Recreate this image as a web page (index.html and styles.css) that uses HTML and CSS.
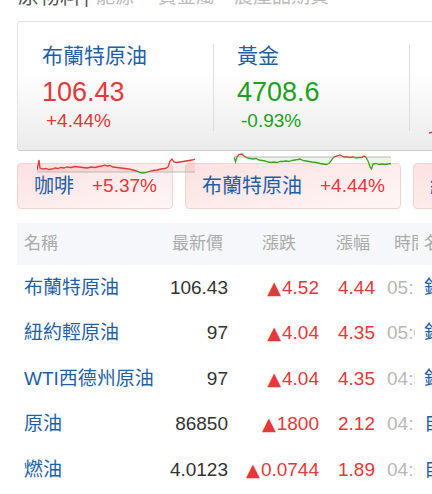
FILE: index.html
```html
<!DOCTYPE html>
<html lang="zh-Hant">
<head>
<meta charset="utf-8">
<title>原物料</title>
<link rel="stylesheet" href="styles.css">
</head>
<body>
<div class="crumbs">
  <div class="crumbs-line">
    <span class="crumb-main">原物料</span><span class="crumb-bar">|</span><span class="crumb c1">能源</span><span class="crumb c2">貴金屬</span><span class="crumb c3">農產品期貨</span>
  </div>
</div>

<div class="hero">
  <div class="board">
    <div class="quote">
      <div class="q-name">布蘭特原油</div>
      <div class="q-price up">106.43</div>
      <div class="q-pct up">+4.44%</div>
    </div>
    <div class="quote">
      <div class="q-name">黃金</div>
      <div class="q-price down">4708.6</div>
      <div class="q-pct down">-0.93%</div>
    </div>
    <div class="quote">
      <div class="q-name">紐約輕原油</div>
      <div class="q-price up">97</div>
      <div class="q-pct up">+4.35%</div>
    </div>
  </div>

  <div class="chips">
    <div class="chip"><span class="chip-name">咖啡</span><span class="chip-pct up">+5.37%</span></div>
    <div class="chip"><span class="chip-name">布蘭特原油</span><span class="chip-pct up">+4.44%</span></div>
    <div class="chip"><span class="chip-name">紐約輕原油</span><span class="chip-pct up">+4.35%</span></div>
  </div>

  <svg class="spark spark1" width="158" height="20" viewBox="0 0 158 20">
    <defs>
      <clipPath id="s1up"><rect x="0" y="0" width="158" height="17"/></clipPath>
      <clipPath id="s1dn"><rect x="0" y="17" width="158" height="3"/></clipPath>
    </defs>
    <polygon clip-path="url(#s1up)" fill="rgba(229,57,53,0.10)" points="0,15 2,5 3,13 6,14 9,13.5 12,14.5 15,14 18,13 21,13.5 24,12.5 27,13 30,12 34,12.5 38,11.5 42,12 46,12.5 50,13 54,12 58,12.5 62,11.5 65,11 68,10 70,11 73,10.5 76,12 80,12.5 84,13 88,13.5 92,14 96,15 100,16 103,17.5 106,18 109,17.5 112,16.5 116,15.5 120,15 124,14 128,13.5 131,12 133,6 135,4 137,7 140,7.5 143,7 146,6.5 149,6 152,5.5 155,5 158,4 158,17 0,17"/>
    <line x1="0" y1="17" x2="158" y2="17" stroke="#b9b9b9" stroke-width="1"/>
    <polyline clip-path="url(#s1up)" fill="none" stroke="#e53935" stroke-width="1.3" points="0,15 2,5 3,13 6,14 9,13.5 12,14.5 15,14 18,13 21,13.5 24,12.5 27,13 30,12 34,12.5 38,11.5 42,12 46,12.5 50,13 54,12 58,12.5 62,11.5 65,11 68,10 70,11 73,10.5 76,12 80,12.5 84,13 88,13.5 92,14 96,15 100,16 103,17.5 106,18 109,17.5 112,16.5 116,15.5 120,15 124,14 128,13.5 131,12 133,6 135,4 137,7 140,7.5 143,7 146,6.5 149,6 152,5.5 155,5 158,4"/>
    <polyline clip-path="url(#s1dn)" fill="none" stroke="#3aa51f" stroke-width="1.3" points="0,15 2,5 3,13 6,14 9,13.5 12,14.5 15,14 18,13 21,13.5 24,12.5 27,13 30,12 34,12.5 38,11.5 42,12 46,12.5 50,13 54,12 58,12.5 62,11.5 65,11 68,10 70,11 73,10.5 76,12 80,12.5 84,13 88,13.5 92,14 96,15 100,16 103,17.5 106,18 109,17.5 112,16.5 116,15.5 120,15 124,14 128,13.5 131,12 133,6 135,4 137,7 140,7.5 143,7 146,6.5 149,6 152,5.5 155,5 158,4"/>
  </svg>

  <svg class="spark spark2" width="158" height="26" viewBox="0 0 158 26">
    <defs>
      <clipPath id="s2up"><rect x="0" y="0" width="158" height="12"/></clipPath>
      <clipPath id="s2dn"><rect x="0" y="12" width="158" height="14"/></clipPath>
    </defs>
    <polygon clip-path="url(#s2dn)" fill="rgba(58,165,31,0.10)" points="0,12 1.5,17 3,12 5,9.5 8,9 10,11 13,13 16,13.5 19,14 22,13.5 25,15 28,15.5 31,16 34,17 37,17.5 40,17 43,17.5 46,16.5 49,16.5 52,16 55,16.5 58,15.5 61,15 64,14.5 66,14 69,15.5 72,16 75,16.5 78,17 82,17.5 86,18.5 89,19 92,19.5 95,18.5 97,16 99,13 101,11.5 103,11 106,10 108,11 110,12 113,12 116,12.5 119,12 122,13 125,12.5 128,12.5 130,11 132,12.5 134,16 136,22 137.5,24 139,19 142,18.5 145,19.5 148,19 151,19.5 154,19 157,18.5 157,12 0,12"/>
    <line x1="0" y1="12" x2="157" y2="12" stroke="#b9b9b9" stroke-width="1"/>
    <polyline clip-path="url(#s2up)" fill="none" stroke="#e53935" stroke-width="1.3" points="0,12 1.5,17 3,12 5,9.5 8,9 10,11 13,13 16,13.5 19,14 22,13.5 25,15 28,15.5 31,16 34,17 37,17.5 40,17 43,17.5 46,16.5 49,16.5 52,16 55,16.5 58,15.5 61,15 64,14.5 66,14 69,15.5 72,16 75,16.5 78,17 82,17.5 86,18.5 89,19 92,19.5 95,18.5 97,16 99,13 101,11.5 103,11 106,10 108,11 110,12 113,12 116,12.5 119,12 122,13 125,12.5 128,12.5 130,11 132,12.5 134,16 136,22 137.5,24 139,19 142,18.5 145,19.5 148,19 151,19.5 154,19 157,18.5"/>
    <polyline clip-path="url(#s2dn)" fill="none" stroke="#3aa51f" stroke-width="1.3" points="0,12 1.5,17 3,12 5,9.5 8,9 10,11 13,13 16,13.5 19,14 22,13.5 25,15 28,15.5 31,16 34,17 37,17.5 40,17 43,17.5 46,16.5 49,16.5 52,16 55,16.5 58,15.5 61,15 64,14.5 66,14 69,15.5 72,16 75,16.5 78,17 82,17.5 86,18.5 89,19 92,19.5 95,18.5 97,16 99,13 101,11.5 103,11 106,10 108,11 110,12 113,12 116,12.5 119,12 122,13 125,12.5 128,12.5 130,11 132,12.5 134,16 136,22 137.5,24 139,19 142,18.5 145,19.5 148,19 151,19.5 154,19 157,18.5"/>
  </svg>

  <svg class="spark spark3" width="4" height="4" viewBox="0 0 4 4">
    <polyline fill="none" stroke="#e53935" stroke-width="1.3" points="0,2 2,1.5 4,1"/>
  </svg>
</div>

<div class="table">
  <div class="thead">
    <div class="h-name">名稱</div>
    <div class="h-price">最新價</div>
    <div class="h-chg">漲跌</div>
    <div class="h-pct">漲幅</div>
    <div class="h-time"><span>時間</span></div>
    <div class="h-src">名稱</div>
  </div>
  <div class="row">
    <div class="c-name">布蘭特原油</div>
    <div class="c-price">106.43</div>
    <div class="c-chg"><span class="tri">▲</span>4.52</div>
    <div class="c-pct">4.44</div>
    <div class="c-time"><span>05:12</span></div>
    <div class="c-src">銀河</div>
  </div>
  <div class="row">
    <div class="c-name">紐約輕原油</div>
    <div class="c-price">97</div>
    <div class="c-chg"><span class="tri">▲</span>4.04</div>
    <div class="c-pct">4.35</div>
    <div class="c-time"><span>05:06</span></div>
    <div class="c-src">銀河</div>
  </div>
  <div class="row">
    <div class="c-name">WTI西德州原油</div>
    <div class="c-price">97</div>
    <div class="c-chg"><span class="tri">▲</span>4.04</div>
    <div class="c-pct">4.35</div>
    <div class="c-time"><span>04:58</span></div>
    <div class="c-src">銀河</div>
  </div>
  <div class="row">
    <div class="c-name">原油</div>
    <div class="c-price">86850</div>
    <div class="c-chg"><span class="tri">▲</span>1800</div>
    <div class="c-pct">2.12</div>
    <div class="c-time"><span>04:17</span></div>
    <div class="c-src">自營</div>
  </div>
  <div class="row">
    <div class="c-name">燃油</div>
    <div class="c-price">4.0123</div>
    <div class="c-chg"><span class="tri">▲</span>0.0744</div>
    <div class="c-pct">1.89</div>
    <div class="c-time"><span>04:55</span></div>
    <div class="c-src">自營</div>
  </div>
</div>
</body>
</html>
```

FILE: styles.css
```css
* {
  box-sizing: border-box;
}

html,
body {
  margin: 0;
  padding: 0;
}

body {
  width: 432px;
  height: 494px;
  overflow: hidden;
  background: #fff;
  font-family: "Liberation Sans", "Noto Sans CJK TC", sans-serif;
  color: #333;
}

.up {
  color: #e5383b;
}

.down {
  color: #1fa01f;
}

/* breadcrumb (cut off at top) */
.crumbs {
  height: 21px;
  overflow: hidden;
}

.crumbs-line {
  margin-top: -14px;
  padding-left: 18px;
  height: 20px;
  line-height: 20px;
  white-space: nowrap;
}

.crumb-main {
  font-size: 21px;
  color: #555;
}

.crumb-bar {
  font-size: 19px;
  color: #555;
  margin-left: 3px;
}

.crumb {
  font-size: 19px;
  color: #bbb;
}

.c1 {
  margin-left: 7px;
}

.c2 {
  margin-left: 24px;
}

.c3 {
  margin-left: 19px;
}

/* hero area */
.hero {
  position: relative;
}

.board {
  margin-left: 17px;
  width: 620px;
  height: 130px;
  padding-top: 22px;
  display: flex;
  border: 1px solid #e3e3e3;
  border-bottom-color: #cdcdcd;
  border-radius: 3px 0 0 3px;
  background: linear-gradient(#ffffff 38%, #ebebeb);
}

.quote {
  flex: none;
  width: 196px;
  height: 87px;
  padding-left: 23px;
  border-left: 1px solid #dedede;
}

.quote:first-child {
  width: 195px;
  padding-left: 24px;
  border-left: none;
}

.q-name {
  font-size: 21px;
  line-height: 24px;
  color: #1f5fa8;
}

.q-price {
  margin-top: 8px;
  font-size: 27px;
  line-height: 32px;
}

.q-pct {
  margin-top: 2px;
  margin-left: 4px;
  font-size: 19px;
  line-height: 22px;
}

.chips {
  display: flex;
  gap: 12px;
  margin: 12px 0 0 17px;
}

.chip {
  flex: none;
  height: 46px;
  display: flex;
  align-items: center;
  gap: 18px;
  padding: 0 15px 0 16px;
  border: 1px solid #f5d3d3;
  border-radius: 4px;
  background: linear-gradient(165deg, #fce1e1, #fff6f6);
  white-space: nowrap;
}

.chip-name {
  font-size: 20px;
  line-height: 24px;
  color: #1f5fa8;
}

.chip-pct {
  font-size: 19px;
  line-height: 24px;
}

.spark {
  position: absolute;
  display: block;
  overflow: visible;
}

.spark1 {
  left: 37px;
  top: 134px;
}

.spark2 {
  left: 234px;
  top: 124px;
}

.spark3 {
  left: 429px;
  top: 110px;
}

/* table */
.table {
  margin: 14px 0 0 17px;
  width: 620px;
}

.thead,
.row {
  display: grid;
  grid-template-columns: 143px 72px 90px 56px 45px 120px;
  align-items: center;
  white-space: nowrap;
}

.thead {
  height: 42px;
  background: #f5f7fa;
  font-size: 17px;
  line-height: 20px;
  color: #aaa;
}

.h-name {
  padding-left: 7px;
}

.h-price {
  padding-left: 12px;
}

.h-chg {
  padding-left: 30px;
}

.h-pct {
  padding-left: 14px;
}

.h-time span {
  display: block;
  margin-left: 16px;
  width: 24px;
  overflow: hidden;
}

.h-src {
  padding-left: 1px;
}

.row {
  height: 45.5px;
  font-size: 19px;
  line-height: 22px;
}

.c-name {
  padding-left: 7px;
  color: #1f5fa8;
}

.c-price {
  text-align: right;
  padding-right: 4px;
  color: #333;
}

.c-chg {
  text-align: right;
  padding-right: 3px;
  color: #e5383b;
}

.tri {
  font-family: "DejaVu Sans", sans-serif;
  font-size: 18px;
  margin-right: 1px;
}

.c-pct {
  text-align: right;
  padding-right: 3px;
  color: #e5383b;
}

.c-time span {
  display: block;
  margin-left: 9px;
  width: 28px;
  overflow: hidden;
  color: #b8b8b8;
}

.c-src {
  padding-left: 1px;
  color: #1f5fa8;
}
```
